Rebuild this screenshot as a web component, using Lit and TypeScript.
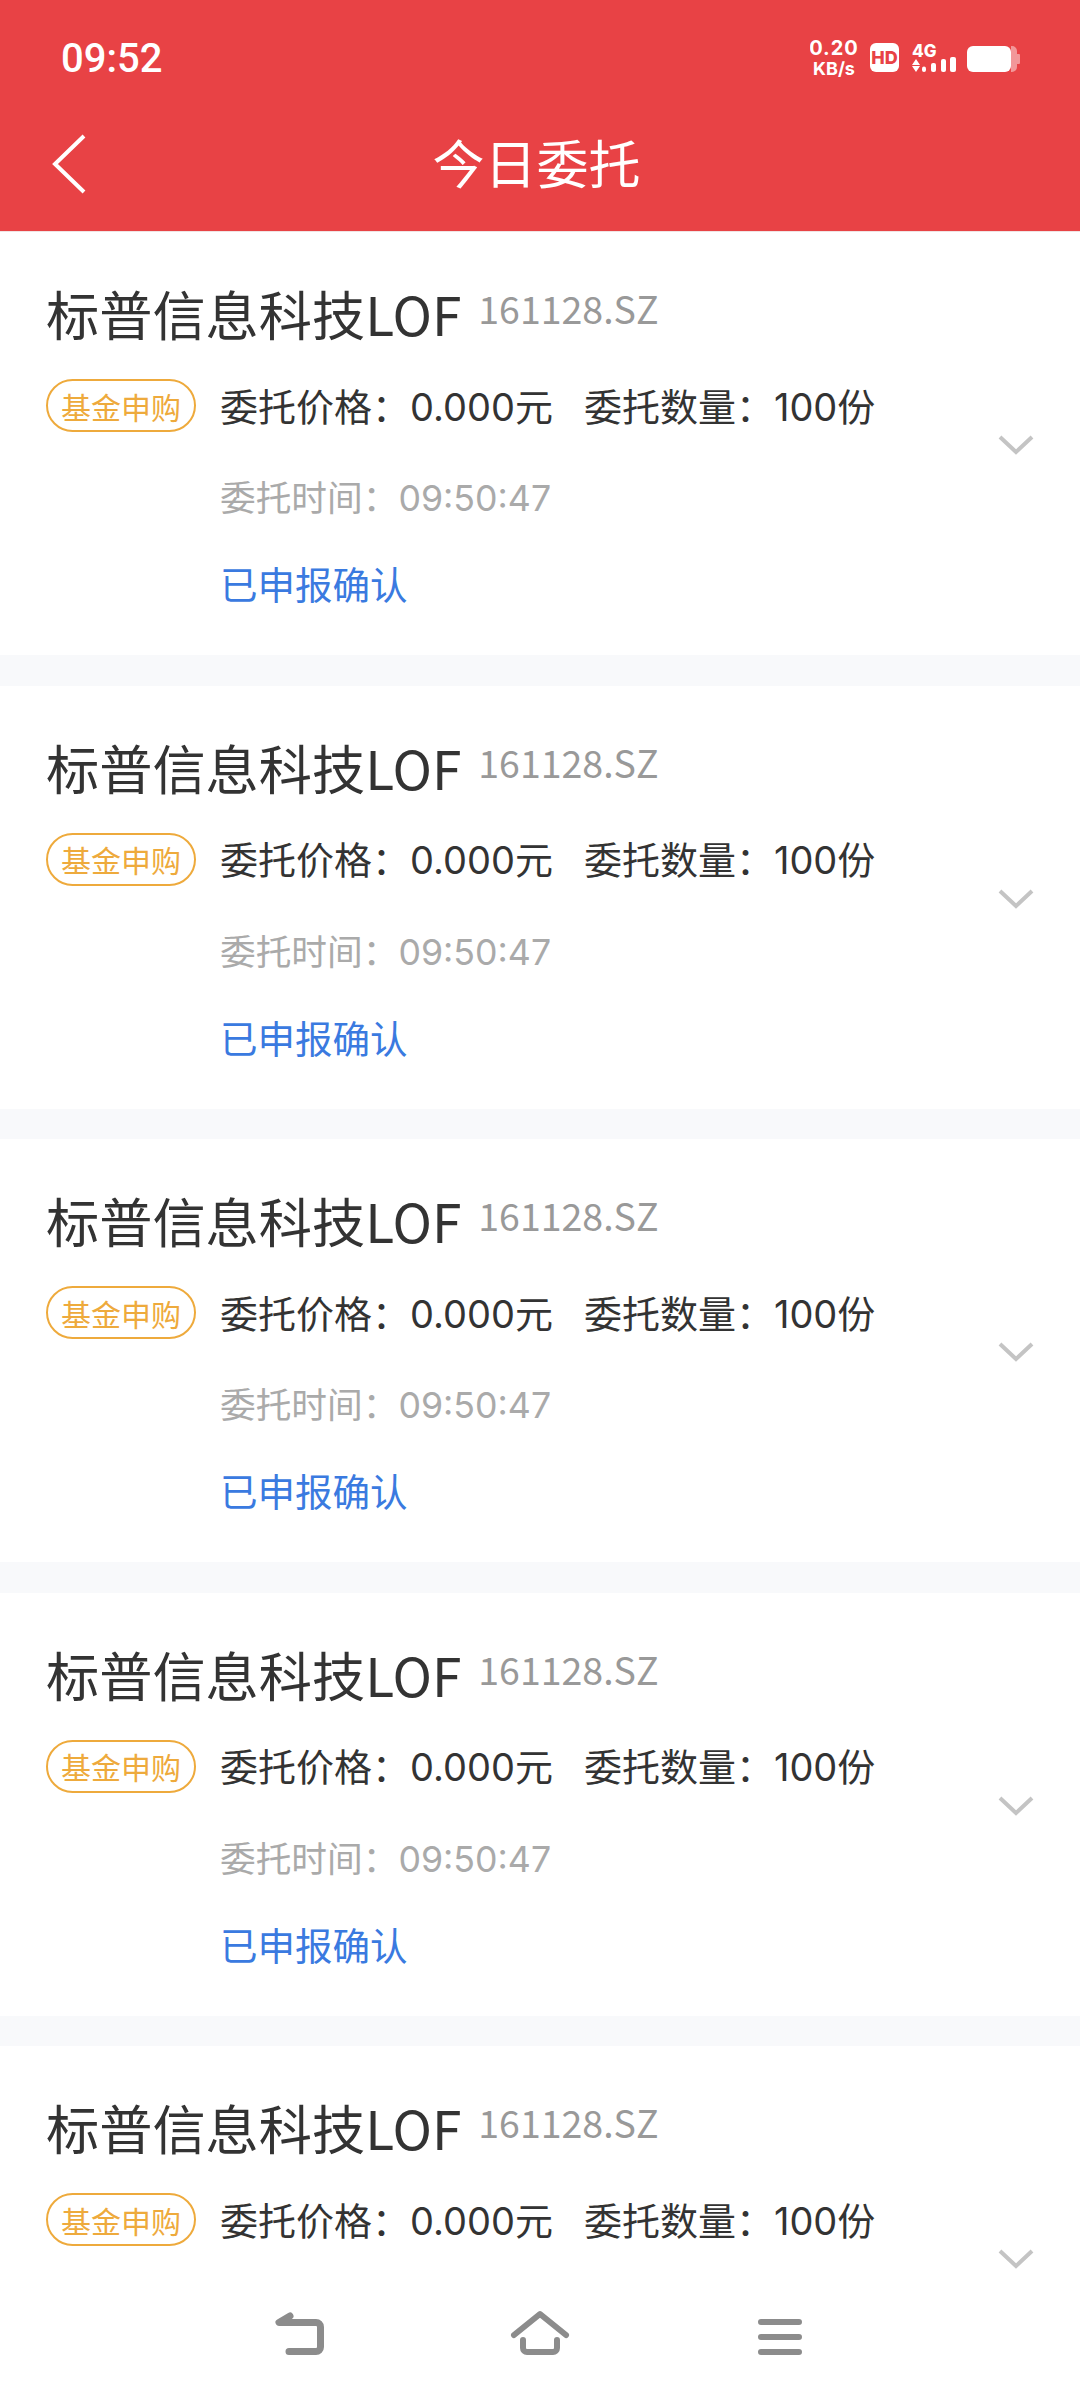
import { LitElement, css, html } from "lit";
import { customElement } from "lit/decorators.js";

const orders = [0, 1, 2, 3, 4];

@customElement("app-root")
export class AppRoot extends LitElement {
    static styles = css`
        :host {
            display: block;
            position: relative;
            width: 1080px;
            height: 2400px;
            overflow: hidden;
            background: #f8f9fb;
            font-family: "Noto Sans CJK SC", "Noto Sans", sans-serif;
        }
        .top {
            height: 231px;
            background: #e84245;
            color: #fff;
            border-bottom: 1px solid #f0e4e4;
        }
        .status {
            height: 116px;
            padding: 0 60px 0 61px;
            display: flex;
            align-items: center;
            justify-content: space-between;
        }
        .time {
            font-family: "Roboto", sans-serif;
            font-size: 40px;
            font-weight: 500;
        }
        .title-bar {
            height: 91px;
            padding-bottom: 24px;
            display: flex;
            align-items: center;
            justify-content: center;
            position: relative;
        }
        .back {
            position: absolute;
            left: 50px;
            top: 18px;
        }
        .title-bar h1 {
            margin: 0 7px 0 0;
            font-size: 52px;
            font-weight: 400;
        }
        .card {
            height: 423px;
            box-sizing: border-box;
            margin-bottom: 30.6px;
            background: #fff;
            padding: 46px 46px 0;
            position: relative;
        }
        .name-row {
            display: flex;
            align-items: center;
            gap: 17px;
            height: 70px;
        }
        .name {
            font-size: 53.2px;
            color: #333;
            line-height: 70px;
        }
        .code {
            font-size: 37.5px;
            line-height: 50px;
            margin-bottom: 10px;
            color: #999;
        }
        .info {
            display: flex;
            align-items: center;
            margin-top: 25px;
            height: 62px;
            font-family: "Inter", "Noto Sans CJK SC", sans-serif;
        }
        .tag {
            box-sizing: border-box;
            width: 150px;
            height: 53px;
            margin: 3px 24px 0 0;
            border: 2px solid #eeaa3c;
            border-radius: 27px;
            color: #eeaa3c;
            font-size: 30px;
            font-family: "Noto Sans CJK SC", sans-serif;
            display: flex;
            align-items: center;
            justify-content: center;
        }
        .info span {
            font-size: 38px;
            color: #333;
        }
        .info .qty {
            margin-left: 31px;
        }
        .sub {
            margin: 38px 0 0 174px;
            font-family: "Inter", "Noto Sans CJK SC", sans-serif;
            font-size: 35.7px;
            color: #aaa;
            line-height: 50px;
        }
        .state {
            margin: 35px 0 0 174px;
            font-size: 37.5px;
            color: #3a7ae0;
            line-height: 50px;
        }
        .chevron {
            position: absolute;
            right: 46px;
            top: 202px;
        }
        .nav {
            position: absolute;
            left: 0;
            right: 0;
            bottom: 0;
            height: 91px;
            padding-top: 19px;
            display: flex;
            align-items: flex-start;
            justify-content: center;
            gap: 180px;
            background: #fff;
        }
    `;

    renderStatusIcons() {
        return html`<svg width="210" height="48" viewBox="0 -6 210 48">
            <text x="24" y="15" fill="#fff" font-family="Inter, sans-serif" font-size="20" font-weight="700" letter-spacing="1" text-anchor="middle">0.20</text>
            <text x="24" y="35" fill="#fff" font-family="Inter, sans-serif" font-size="18" font-weight="700" text-anchor="middle">KB/s</text>
            <rect x="60" y="3" width="29" height="29" rx="6" fill="#fff" />
            <text x="74.5" y="24" fill="#e84245" font-family="Inter, sans-serif" font-size="18" font-weight="800" text-anchor="middle">HD</text>
            <text x="102" y="17" fill="#fff" font-family="Inter, sans-serif" font-size="17" font-weight="800">4G</text>
            <path d="M106 19l4 6h-8zM106 32l4-6h-8z" fill="#fff" />
            <rect x="112" y="26.5" width="4" height="5.5" rx="2" fill="#fff" />
            <rect x="121" y="23" width="5" height="9" rx="2" fill="#fff" />
            <rect x="131" y="19" width="5" height="13" rx="2" fill="#fff" />
            <rect x="140" y="17" width="6" height="15" rx="2" fill="#fff" />
            <rect x="157" y="6" width="44" height="26" rx="6" fill="#fff" />
            <path d="M201 6h1a5 5 0 0 1 5 5v3h2a1 1 0 0 1 1 1v8a1 1 0 0 1-1 1h-2v3a5 5 0 0 1-5 5h-1z" fill="#fff" opacity="0.45" />
        </svg>`;
    }

    renderOrder(last: boolean) {
        return html`<div class="card">
            <div class="name-row">
                <div class="name">标普信息科技LOF</div>
                <div class="code">161128.SZ</div>
            </div>
            <div class="info">
                <div class="tag">基金申购</div>
                <span>委托价格：0.000元</span>
                <span class="qty">委托数量：100份</span>
            </div>
            ${last
                ? null
                : html`<div class="sub">委托时间：09:50:47</div>
                      <div class="state">已申报确认</div>`}
            <svg class="chevron" width="36" height="22" viewBox="0 0 36 22">
                <path d="M2 3l16 15L34 3" fill="none" stroke="#c4c4c4" stroke-width="4" />
            </svg>
        </div>`;
    }

    render() {
        return html`
            <div class="top">
                <div class="status">
                    <div class="time">09:52</div>
                    ${this.renderStatusIcons()}
                </div>
                <div class="title-bar">
                    <svg class="back" width="40" height="60" viewBox="0 0 40 60">
                        <path d="M34 2L5 30l29 28" fill="none" stroke="#fff" stroke-width="4" />
                    </svg>
                    <h1>今日委托</h1>
                </div>
            </div>
            ${orders.map((i) => this.renderOrder(i === orders.length - 1))}
            <div class="nav">
                <svg width="60" height="50" viewBox="0 0 60 50">
                    <path d="M20 7L9 13.5H46a4.5 4.5 0 0 1 4.5 4.5V38a4.5 4.5 0 0 1-4.5 4.5H19" fill="none" stroke="#8c8c8c" stroke-width="7" stroke-linecap="round" stroke-linejoin="round" />
                </svg>
                <svg width="60" height="50" viewBox="0 0 60 50">
                    <path d="M4 26L30 5l26 21" fill="none" stroke="#8c8c8c" stroke-width="6" stroke-linecap="round" stroke-linejoin="round" />
                    <path d="M13 31v8a4 4 0 0 0 4 4h26a4 4 0 0 0 4-4v-8" fill="none" stroke="#8c8c8c" stroke-width="6" stroke-linecap="round" />
                </svg>
                <svg width="60" height="50" viewBox="0 0 60 50">
                    <path d="M11 13h38M11 28h38M11 43h38" fill="none" stroke="#8c8c8c" stroke-width="6" stroke-linecap="round" />
                </svg>
            </div>
        `;
    }
}
